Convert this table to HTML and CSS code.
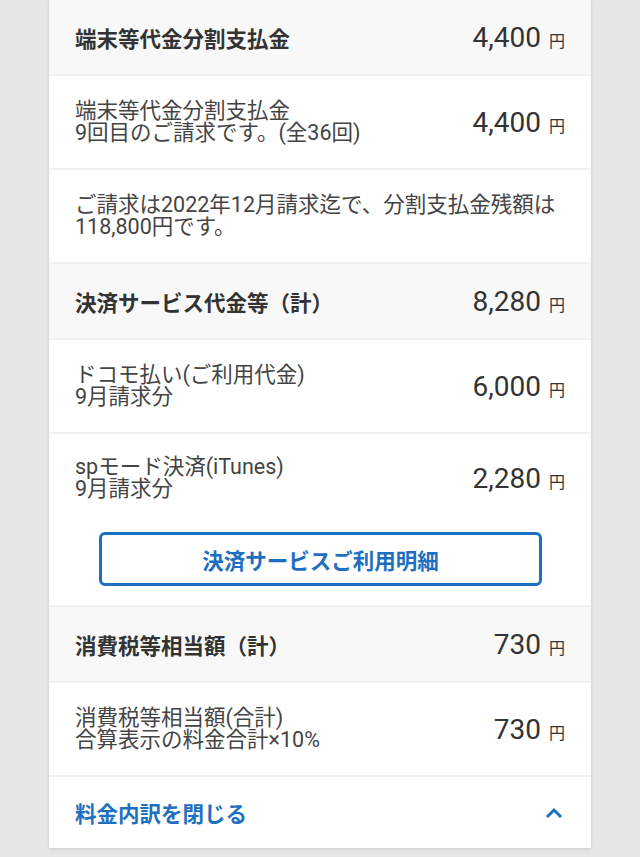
FILE: index.html
```html
<!DOCTYPE html>
<html lang="ja">
<head>
    <title>料金内訳</title>
    <meta charset="UTF-8">
    <meta name="viewport" content="width=device-width, initial-scale=1.0">
    <link rel="stylesheet" href="styles.css">
</head>
<body>
    <div class="card">
        <div class="row head">
            <div class="label">端末等代金分割支払金</div>
            <div class="amount"><span class="num">4,400</span><span class="yen">円</span></div>
        </div>
        <div class="row item">
            <div class="label">端末等代金分割支払金<br>9回目のご請求です。(全36回)</div>
            <div class="amount"><span class="num">4,400</span><span class="yen">円</span></div>
        </div>
        <div class="row item">
            <div class="label">ご請求は2022年12月請求迄で、分割支払金残額は<br>118,800円です。</div>
        </div>

        <div class="row head">
            <div class="label">決済サービス代金等（計）</div>
            <div class="amount"><span class="num">8,280</span><span class="yen">円</span></div>
        </div>
        <div class="row item">
            <div class="label">ドコモ払い(ご利用代金)<br>9月請求分</div>
            <div class="amount"><span class="num">6,000</span><span class="yen">円</span></div>
        </div>
        <div class="block">
            <div class="row item last">
                <div class="label">spモード決済(iTunes)<br>9月請求分</div>
                <div class="amount"><span class="num">2,280</span><span class="yen">円</span></div>
            </div>
            <a class="btn" href="#">決済サービスご利用明細</a>
        </div>

        <div class="row head">
            <div class="label">消費税等相当額（計）</div>
            <div class="amount"><span class="num">730</span><span class="yen">円</span></div>
        </div>
        <div class="row item">
            <div class="label">消費税等相当額(合計)<br>合算表示の料金合計×10%</div>
            <div class="amount"><span class="num">730</span><span class="yen">円</span></div>
        </div>

        <a class="row close" href="#">
            <span>料金内訳を閉じる</span>
            <svg width="18" height="12" viewBox="0 0 18 12">
                <path d="M2 10 L9 3 L16 10" fill="none" stroke="#1d6fc1" stroke-width="3"/>
            </svg>
        </a>
    </div>
</body>
</html>
```

FILE: styles.css
```css
body {
    margin: 0;
    background-color: #e6e6e6;
    font-family: Roboto, "Noto Sans CJK JP", sans-serif;
    color: #333;
}

.card {
    width: 542px;
    margin: 0 0 9px 49px;
    background-color: #fff;
    box-shadow: 0 1px 3px rgba(0, 0, 0, 0.12);
}

.row {
    display: flex;
    align-items: center;
    justify-content: space-between;
    padding: 0 26px;
    border-top: 2px solid #f0f0f0;
}

.card > .row:first-child {
    border-top: none;
}

.head {
    height: 74px;
    background-color: #f8f8f8;
}

.head .label {
    font-size: 21.5px;
    font-weight: 700;
    color: #333;
}

.item {
    height: 92px;
}

.item .label {
    font-size: 21.5px;
    line-height: 22px;
    color: #444;
    font-weight: 400;
}

.amount {
    display: flex;
    align-items: baseline;
    gap: 8px;
    white-space: nowrap;
}

.num {
    font-size: 28px;
    color: #333;
}

.yen {
    font-family: "Noto Sans CJK JP", sans-serif;
    font-size: 16px;
    color: #333;
}

.block {
    border-top: 2px solid #f0f0f0;
    padding-bottom: 19px;
}

.block .last {
    border-top: none;
    height: 88px;
    margin-bottom: 10px;
}

.btn {
    display: flex;
    align-items: center;
    justify-content: center;
    margin: 0 49px 0 50px;
    height: 48px;
    border: 3px solid #1d6fc1;
    border-radius: 6px;
    color: #1d6fc1;
    font-size: 21.5px;
    font-weight: 700;
    text-decoration: none;
}

.close {
    height: 71px;
    color: #1d6fc1;
    font-size: 21.5px;
    font-weight: 700;
    text-decoration: none;
}

.close svg {
    margin-right: 2px;
}
```
